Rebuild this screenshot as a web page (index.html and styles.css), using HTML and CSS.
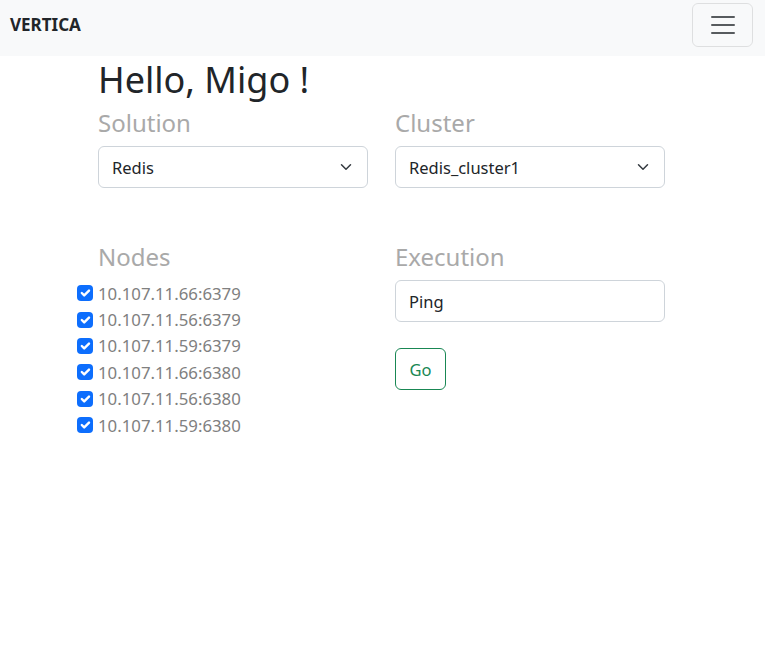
FILE: index.html
```html
<!DOCTYPE html>
<html>
<head>
<meta charset="utf-8">
<link rel="stylesheet" href="styles.css">
</head>
<body>
<nav class="navbar">
  <span class="brand">VERTICA</span>
  <button class="toggler" type="button" aria-label="Toggle navigation">
    <svg width="30" height="30" viewBox="0 0 30 30"><path stroke="rgba(33,37,41,0.75)" stroke-linecap="round" stroke-miterlimit="10" stroke-width="2" d="M4 7h22M4 15h22M4 23h22"/></svg>
  </button>
</nav>
<main class="container">
  <h1 class="hello">Hello, Migo !</h1>
  <div class="row">
    <div class="col">
      <h4 class="label">Solution</h4>
      <div class="select"><span>Redis</span><svg class="chev" width="14" height="12" viewBox="0 0 16 16"><path fill="none" stroke="#343a40" stroke-linecap="round" stroke-linejoin="round" stroke-width="2" d="m2 5 6 6 6-6"/></svg></div>
    </div>
    <div class="col">
      <h4 class="label">Cluster</h4>
      <div class="select"><span>Redis_cluster1</span><svg class="chev" width="14" height="12" viewBox="0 0 16 16"><path fill="none" stroke="#343a40" stroke-linecap="round" stroke-linejoin="round" stroke-width="2" d="m2 5 6 6 6-6"/></svg></div>
    </div>
  </div>
  <div class="row row2">
    <div class="col">
      <h4 class="label">Nodes</h4>
      <ul class="nodes">
        <li class="check"><span class="box"><svg viewBox="0 0 20 20" width="16" height="16"><path fill="none" stroke="#fff" stroke-linecap="round" stroke-linejoin="round" stroke-width="3" d="m6 10 3 3 6-6"/></svg></span>10.107.11.66:6379</li>
        <li class="check"><span class="box"><svg viewBox="0 0 20 20" width="16" height="16"><path fill="none" stroke="#fff" stroke-linecap="round" stroke-linejoin="round" stroke-width="3" d="m6 10 3 3 6-6"/></svg></span>10.107.11.56:6379</li>
        <li class="check"><span class="box"><svg viewBox="0 0 20 20" width="16" height="16"><path fill="none" stroke="#fff" stroke-linecap="round" stroke-linejoin="round" stroke-width="3" d="m6 10 3 3 6-6"/></svg></span>10.107.11.59:6379</li>
        <li class="check"><span class="box"><svg viewBox="0 0 20 20" width="16" height="16"><path fill="none" stroke="#fff" stroke-linecap="round" stroke-linejoin="round" stroke-width="3" d="m6 10 3 3 6-6"/></svg></span>10.107.11.66:6380</li>
        <li class="check"><span class="box"><svg viewBox="0 0 20 20" width="16" height="16"><path fill="none" stroke="#fff" stroke-linecap="round" stroke-linejoin="round" stroke-width="3" d="m6 10 3 3 6-6"/></svg></span>10.107.11.56:6380</li>
        <li class="check"><span class="box"><svg viewBox="0 0 20 20" width="16" height="16"><path fill="none" stroke="#fff" stroke-linecap="round" stroke-linejoin="round" stroke-width="3" d="m6 10 3 3 6-6"/></svg></span>10.107.11.59:6380</li>
      </ul>
    </div>
    <div class="col">
      <h4 class="label">Execution</h4>
      <div class="input">Ping</div>
      <button class="go" type="button">Go</button>
    </div>
  </div>
</main>
</body>
</html>
```
FILE: styles.css
```css
* { box-sizing: border-box; }
html, body { margin: 0; padding: 0; }
body {
  font-family: "Noto Sans", "Open Sans", sans-serif;
  font-size: 16px;
  color: #212529;
  background: #fff;
  width: 765px;
  height: 664px;
  overflow: hidden;
}
.navbar {
  height: 56px;
  background: #f8f9fa;
  display: flex;
  align-items: flex-start;
  justify-content: space-between;
  padding: 3px 12px 0 10px;
}
.brand {
  font-weight: 700;
  font-size: 17px;
  line-height: 44px;
  color: #212529;
}
.toggler {
  width: 61px;
  height: 44px;
  border: 1px solid rgba(0,0,0,0.1);
  border-radius: 6px;
  background: transparent;
  display: flex;
  align-items: center;
  justify-content: center;
  padding: 0;
}
.toggler svg { display: block; }
.container {
  width: 567px;
  margin: 0 0 0 98px;
}
.hello {
  font-size: 36px;
  font-weight: 400;
  line-height: 48px;
  margin: 0 0 4px;
}
.row {
  display: flex;
  gap: 27px;
}
.row2 { margin-top: 54px; }
.col { flex: 0 0 270px; width: 270px; }
.label {
  font-size: 24px;
  font-weight: 400;
  color: #a9a9a9;
  line-height: 30px;
  margin: 0 0 8px;
}
.select, .input {
  height: 42px;
  border: 1px solid #ced4da;
  border-radius: 6px;
  padding: 0 14px 0 13px;
  display: flex;
  align-items: center;
  justify-content: space-between;
  font-size: 16.5px;
  color: #212529;
}
.chev { display: block; }
.nodes {
  list-style: none;
  margin: 0 0 0 -21px;
  padding: 0;
}
.check {
  display: flex;
  align-items: center;
  height: 26.4px;
  color: #808080;
  font-size: 16.8px;
}
.box {
  width: 16px;
  height: 16px;
  border-radius: 4px;
  background: #0d6efd;
  margin-right: 5px;
  display: flex;
}
.box svg { display: block; }
.go {
  margin-top: 26px;
  height: 42px;
  width: 51px;
  border: 1px solid #198754;
  border-radius: 6px;
  background: #fff;
  color: #198754;
  font-family: inherit;
  font-size: 16.5px;
  padding: 0;
}
```
